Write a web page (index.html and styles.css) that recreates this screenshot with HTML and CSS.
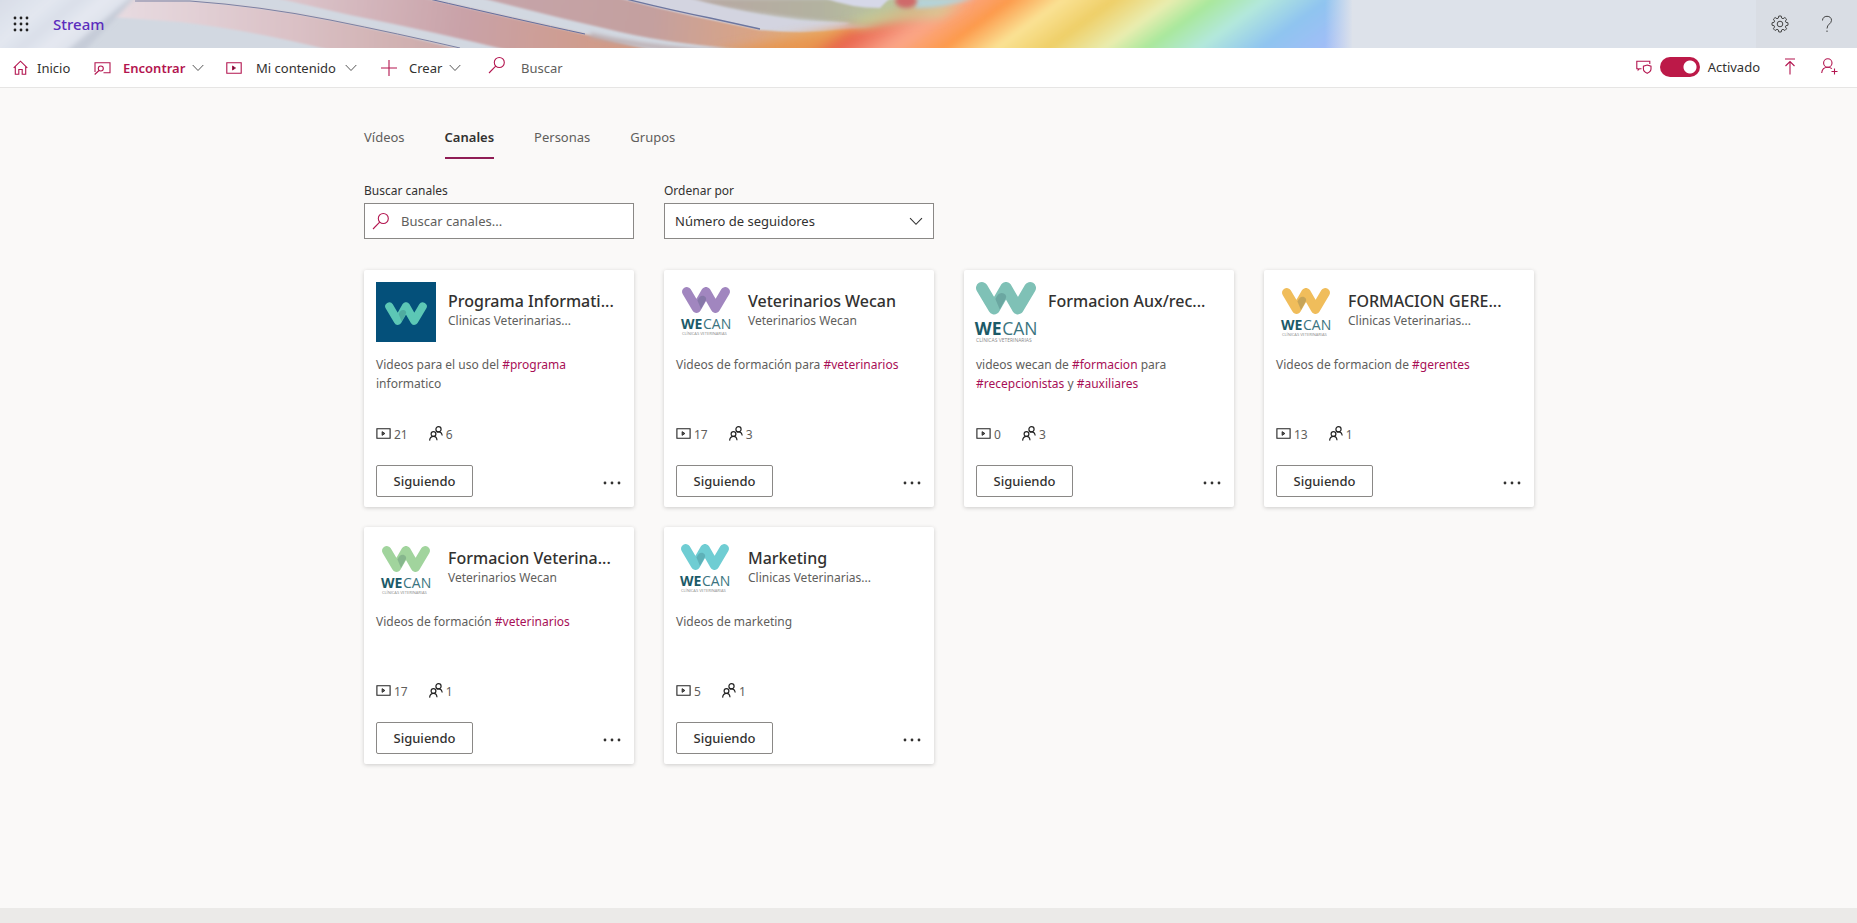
FILE: index.html
```html
<!DOCTYPE html>
<html lang="es">
<head>
<meta charset="utf-8">
<title>Stream</title>
<link rel="stylesheet" href="styles.css">
</head>
<body>
<svg class="defs" aria-hidden="true">
  <symbol id="i-chevron" viewBox="0 0 12 8"><path d="M.7 1 6 6.5 11.300 1"/></symbol>
  <symbol id="i-search" viewBox="0 0 18 18"><circle cx="11.300" cy="6.500" r="5"/><path d="M7.700 10.200 1 17"/></symbol>
  <symbol id="i-video" viewBox="0 0 16 12"><path d="M.8 .8h14.400v10.400H.8z"/><path class="solid" d="M6.500 4v4l3-2z"/></symbol>
  <symbol id="i-people" viewBox="0 0 14 15"><circle cx="4.500" cy="8" r="2.400"/><path d="M.6 14.600c.2-2.600 1.700-4.200 3.900-4.200s3.300 1.500 3.500 3.800"/><circle cx="9.500" cy="3.300" r="2.600"/><path d="M7.700 6.300c.6-.4 1.200-.5 1.800-.5 2 0 3.400 1.300 3.700 3.700"/></symbol>
  <symbol id="i-more" viewBox="0 0 18 4"><circle cx="2" cy="2" r="1.400"/><circle cx="9" cy="2" r="1.400"/><circle cx="16" cy="2" r="1.400"/></symbol>
  <symbol id="w-mark" viewBox="0 0 60 60"><path class="w" d="M10.700 9.700 20.500 26.200 30 9.700M30 9.700 39.500 26.200 49.300 9.700"/><path class="fold" d="M21.500 18.500c1.500-4 4.200-5.700 6.800-4.300 1.800 1 2.300 2.500 1.500 4L25 27z"/></symbol>
</svg>

<header class="banner">
  <svg class="banner-art" viewBox="0 0 1857 48" preserveAspectRatio="none" aria-hidden="true">
    <defs>
      <linearGradient id="rainbow" gradientUnits="userSpaceOnUse" x1="880" y1="0" x2="1400" y2="0" gradientTransform="skewX(-54)">
        <stop offset="0" stop-color="#e8964f"/><stop offset=".04" stop-color="#e8604a"/><stop offset=".15" stop-color="#fba88c"/><stop offset=".25" stop-color="#fd9a4c"/><stop offset=".35" stop-color="#fae294"/><stop offset=".45" stop-color="#efcf68"/><stop offset=".56" stop-color="#e9edb0"/><stop offset=".64" stop-color="#a9e89c"/><stop offset=".74" stop-color="#b3e8dc"/><stop offset=".86" stop-color="#8fc4f0"/><stop offset="1" stop-color="#a4bdf8"/>
      </linearGradient>
      <linearGradient id="fade"><stop offset="0" stop-color="#dde2ea" stop-opacity="0"/><stop offset="1" stop-color="#dde2ea"/></linearGradient>
      <linearGradient id="band" gradientUnits="userSpaceOnUse" x1="110" y1="0" x2="460" y2="0"><stop offset="0" stop-color="#e8dce2"/><stop offset=".5" stop-color="#dbc2c7"/><stop offset="1" stop-color="#cba8a6"/></linearGradient>
      <linearGradient id="band2" gradientUnits="userSpaceOnUse" x1="285" y1="0" x2="640" y2="48"><stop offset="0" stop-color="#dcc6cc"/><stop offset=".5" stop-color="#c9a2a8"/><stop offset="1" stop-color="#d29a82"/></linearGradient>
      <linearGradient id="band3" gradientUnits="userSpaceOnUse" x1="490" y1="0" x2="850" y2="48"><stop offset="0" stop-color="#c6a5aa"/><stop offset=".45" stop-color="#c4a09f"/><stop offset=".75" stop-color="#dba583"/><stop offset="1" stop-color="#ecb764"/></linearGradient>
      <linearGradient id="band4" gradientUnits="userSpaceOnUse" x1="690" y1="0" x2="950" y2="0"><stop offset="0" stop-color="#b8a7a3"/><stop offset=".5" stop-color="#b3b2a0"/><stop offset="1" stop-color="#c0d49c"/></linearGradient>
      <linearGradient id="sheen" gradientUnits="userSpaceOnUse" x1="0" y1="0" x2="130" y2="0" gradientTransform="skewX(-50)"><stop offset="0" stop-color="#d8dde7"/><stop offset=".4" stop-color="#e3e7f0"/><stop offset=".6" stop-color="#dadfe9"/><stop offset=".8" stop-color="#e5e8f1"/><stop offset=".96" stop-color="#dfe3ec"/><stop offset="1" stop-color="#c6ccd8"/></linearGradient>
      <filter id="soft" x="-20%" y="-60%" width="140%" height="220%"><feGaussianBlur stdDeviation="6"/></filter>
      <filter id="light" x="-20%" y="-60%" width="140%" height="220%"><feGaussianBlur stdDeviation="2"/></filter>
      <filter id="edge" x="-5%" y="-20%" width="110%" height="140%"><feGaussianBlur stdDeviation=".8"/></filter>
    </defs>
    <rect width="1857" height="48" fill="#d2d8e1"/>
    <path d="M125-2 190 1Q260 6 330 20T462 50H330Q250 30 180 22L112 17z" fill="url(#band)" filter="url(#edge)"/>
    <path d="M135 1H190Q260 6 330 20T460 48" fill="none" stroke="#7b81a3"/>
    <path d="M276-2H425Q520 20 580 33Q620 43 660 52H515Q440 33 350 15z" fill="url(#band2)" filter="url(#edge)"/>
    <path d="M425-2Q520 20 585 34" fill="none" stroke="#646f9e"/>
    <path d="M482-2H620Q690 15 760 30Q830 34 900 24L920 52H780Q680 46 620 32Q550 16 482-2z" fill="url(#band3)" filter="url(#edge)"/>
    <path d="M590 35Q640 47 700 51H800" fill="none" stroke="#b9a9ab" stroke-width="4" filter="url(#light)"/>
    <path d="M682-2H960L900 30 840 23Q750 16 682-2z" fill="url(#band4)" filter="url(#light)"/>
    <path d="M622-2H688Q740 13 800 21L850 23Q830 34 780 31Q700 20 622-2z" fill="#d3d4e0" filter="url(#edge)"/>
    <path d="M622-2Q670 10 710 18L760 29" fill="none" stroke="#6d769f" stroke-width="1.300"/>
    <path d="M720 52Q800 36 865 25Q900 12 930 5L1010-30H1420V70H720z" fill="url(#rainbow)" filter="url(#soft)"/>
    <path d="M985-2H1420V50H910z" fill="url(#rainbow)" filter="url(#light)"/>
    <path d="M850 22Q880 13 900 12T965 2L940 16Q900 18 860 27z" fill="#c7d99a" filter="url(#soft)"/>
    <path d="M825-2H890L880 8Q850 8 825-2z" fill="#d6d8e8" filter="url(#edge)"/>
    <path d="M915-2H975Q940 9 915 8z" fill="#b5d3d8" filter="url(#light)"/>
    <ellipse cx="906" cy="1" rx="11" ry="7" fill="#cf6a6a" filter="url(#light)"/>
    <path d="M-9-9H141L80 56H-9z" fill="url(#sheen)" filter="url(#light)"/>
    <rect x="1325" width="28" height="48" fill="url(#fade)"/>
    <rect x="1352" width="505" height="48" fill="#dde2ea"/>
  </svg>
  <button class="waffle" aria-label="Iniciador de aplicaciones">
    <svg viewBox="0 0 16 16" width="16" height="16"><g fill="#222"><circle cx="2" cy="2" r="1.400"/><circle cx="8" cy="2" r="1.400"/><circle cx="14" cy="2" r="1.400"/><circle cx="2" cy="8" r="1.400"/><circle cx="8" cy="8" r="1.400"/><circle cx="14" cy="8" r="1.400"/><circle cx="2" cy="14" r="1.400"/><circle cx="8" cy="14" r="1.400"/><circle cx="14" cy="14" r="1.400"/></g></svg>
  </button>
  <a class="brand" href="#">Stream</a>
  <div class="banner-tools">
    <button aria-label="Configuración"><svg class="line" viewBox="0 0 18 18" width="18" height="18"><circle cx="9" cy="9" r="2.800"/><path d="M7.800 1h2.400l.5 2.100 1.300.6 1.900-1.200 1.700 1.700-1.200 1.900.5 1.200 2.100.5v2.400l-2.100.5-.5 1.200 1.200 1.900-1.700 1.700-1.900-1.200-1.300.6-.5 2.100H7.800l-.5-2.100-1.300-.6-1.900 1.200-1.700-1.700 1.200-1.900-.5-1.200L1 10.200V7.800l2.100-.5.5-1.200-1.200-1.900 1.700-1.700L6 3.700l1.300-.6z"/></svg></button>
    <button aria-label="Ayuda"><svg class="line" viewBox="0 0 12 18" width="12" height="18"><path d="M1.500 5.500C1.500 3 3.300 1.300 6 1.300s4.500 1.600 4.500 4c0 3.600-4.500 3.800-4.500 8.200"/><path d="M6 15.500V17"/></svg></button>
  </div>
</header>

<nav class="nav">
  <a class="item home" href="#"><svg class="pink" viewBox="0 0 15 15" width="15" height="15"><path d="M.7 7.800 7.500 1.200l6.800 6.600M2.300 6.500v7.800h3.500V9.500h3.400v4.800h3.500V6.500"/></svg>Inicio</a>
  <button class="item find"><svg class="pink" viewBox="0 0 17 14" width="17" height="14"><path d="M1 11V1.700h15v10H9.500"/><circle cx="6.800" cy="7.500" r="2.500"/><path d="M5 9.500.7 13.500"/></svg>Encontrar<svg class="chev" width="12" height="8"><use href="#i-chevron"/></svg></button>
  <button class="item mine"><svg class="pink" width="16" height="12"><use href="#i-video"/></svg>Mi contenido<svg class="chev" width="12" height="8"><use href="#i-chevron"/></svg></button>
  <button class="item create"><svg class="pink" viewBox="0 0 16 16" width="16" height="16"><path d="M8 0v16M0 8h16"/></svg>Crear<svg class="chev" width="12" height="8"><use href="#i-chevron"/></svg></button>
  <div class="find-box"><svg class="pink" width="18" height="18"><use href="#i-search"/></svg><input type="search" placeholder="Buscar" aria-label="Buscar"></div>
  <div class="nav-right">
    <svg class="pink" viewBox="0 0 16 14" width="16" height="14" aria-hidden="true"><path d="M5.500 8.700H3.500L2.200 10V8.700H.8V1.200h13V4"/><path d="M11.200 5 15 6.200V9c0 2-1.500 3.300-3.800 4.300C9 12.300 7.400 11 7.400 9V6.200z"/></svg>
    <label class="toggle"><input type="checkbox" role="switch" checked><span>Activado</span></label>
    <button aria-label="Cargar"><svg class="pink" viewBox="0 0 12 17" width="12" height="17"><path d="M1 1h10M6 16.500V3.500M1.500 8 6 3.500 10.500 8"/></svg></button>
    <button aria-label="Invitar"><svg class="pink" viewBox="0 0 17 17" width="17" height="17"><circle cx="6.800" cy="5" r="4.200"/><path d="M.7 15c.3-3.500 2.700-5.800 6.100-5.800 1.700 0 3 .5 4 1.500M13.500 10.500v6M10.500 13.500h6"/></svg></button>
  </div>
</nav>

<main class="page">
  <div class="tabs" role="tablist">
    <a href="#" role="tab">Vídeos</a><a class="active" href="#" role="tab" aria-selected="true">Canales</a><a href="#" role="tab">Personas</a><a href="#" role="tab">Grupos</a>
  </div>
  <div class="grid filters">
    <div class="field"><label for="q">Buscar canales</label><div class="box"><svg class="pink" width="18" height="18"><use href="#i-search"/></svg><input id="q" type="text" placeholder="Buscar canales..."></div></div>
    <div class="field"><label for="sort">Ordenar por</label><div class="box"><select id="sort"><option>Número de seguidores</option></select><svg class="arrow" width="14" height="9"><use href="#i-chevron"/></svg></div></div>
  </div>
  <div class="grid">
    <article class="card">
      <div class="head"><svg class="logo navy" viewBox="0 0 60 60"><rect width="60" height="60"/><use href="#w-mark" x="4" y="16" width="52" height="52"/></svg><div class="names"><h2>Programa Informati...</h2><p>Clinicas Veterinarias...</p></div></div>
      <p class="desc">Videos para el uso del <a href="#">#programa</a> informatico</p>
      <div class="stats"><span><svg width="15" height="11"><use href="#i-video"/></svg>21</span><span><svg width="14" height="15"><use href="#i-people"/></svg>6</span></div>
      <div class="foot"><button class="follow">Siguiendo</button><button class="more" aria-label="Más"><svg width="18" height="4"><use href="#i-more"/></svg></button></div>
    </article>
    <article class="card">
      <div class="head"><svg class="logo purple" viewBox="0 0 60 60"><use href="#w-mark" width="60" height="60"/><text class="we" x="5" y="47">WE</text><text class="can" x="27" y="47">CAN</text><text class="tag" x="6" y="53">CLÍNICAS VETERINARIAS</text></svg><div class="names"><h2>Veterinarios Wecan</h2><p>Veterinarios Wecan</p></div></div>
      <p class="desc">Videos de formación para <a href="#">#veterinarios</a></p>
      <div class="stats"><span><svg width="15" height="11"><use href="#i-video"/></svg>17</span><span><svg width="14" height="15"><use href="#i-people"/></svg>3</span></div>
      <div class="foot"><button class="follow">Siguiendo</button><button class="more" aria-label="Más"><svg width="18" height="4"><use href="#i-more"/></svg></button></div>
    </article>
    <article class="card">
      <div class="head"><svg class="logo teal" viewBox="6 5 48 48"><use href="#w-mark" width="60" height="60"/><text class="we" x="5" y="47">WE</text><text class="can" x="27" y="47">CAN</text><text class="tag" x="6" y="53">CLÍNICAS VETERINARIAS</text></svg><div class="names"><h2>Formacion Aux/rec...</h2></div></div>
      <p class="desc">videos wecan de <a href="#">#formacion</a> para <a href="#">#recepcionistas</a> y <a href="#">#auxiliares</a></p>
      <div class="stats"><span><svg width="15" height="11"><use href="#i-video"/></svg>0</span><span><svg width="14" height="15"><use href="#i-people"/></svg>3</span></div>
      <div class="foot"><button class="follow">Siguiendo</button><button class="more" aria-label="Más"><svg width="18" height="4"><use href="#i-more"/></svg></button></div>
    </article>
    <article class="card">
      <div class="head"><svg class="logo amber" viewBox="0 -1 60 60"><use href="#w-mark" width="60" height="60"/><text class="we" x="5" y="47">WE</text><text class="can" x="27" y="47">CAN</text><text class="tag" x="6" y="53">CLÍNICAS VETERINARIAS</text></svg><div class="names"><h2>FORMACION GERE...</h2><p>Clinicas Veterinarias...</p></div></div>
      <p class="desc">Videos de formacion de <a href="#">#gerentes</a></p>
      <div class="stats"><span><svg width="15" height="11"><use href="#i-video"/></svg>13</span><span><svg width="14" height="15"><use href="#i-people"/></svg>1</span></div>
      <div class="foot"><button class="follow">Siguiendo</button><button class="more" aria-label="Más"><svg width="18" height="4"><use href="#i-more"/></svg></button></div>
    </article>
    <article class="card">
      <div class="head"><svg class="logo green" viewBox="0 -2 60 60"><use href="#w-mark" width="60" height="60"/><text class="we" x="5" y="47">WE</text><text class="can" x="27" y="47">CAN</text><text class="tag" x="6" y="53">CLÍNICAS VETERINARIAS</text></svg><div class="names"><h2>Formacion Veterina...</h2><p>Veterinarios Wecan</p></div></div>
      <p class="desc">Videos de formación <a href="#">#veterinarios</a></p>
      <div class="stats"><span><svg width="15" height="11"><use href="#i-video"/></svg>17</span><span><svg width="14" height="15"><use href="#i-people"/></svg>1</span></div>
      <div class="foot"><button class="follow">Siguiendo</button><button class="more" aria-label="Más"><svg width="18" height="4"><use href="#i-more"/></svg></button></div>
    </article>
    <article class="card">
      <div class="head"><svg class="logo cyan" viewBox="1 0 60 60"><use href="#w-mark" width="60" height="60"/><text class="we" x="5" y="47">WE</text><text class="can" x="27" y="47">CAN</text><text class="tag" x="6" y="53">CLÍNICAS VETERINARIAS</text></svg><div class="names"><h2>Marketing</h2><p>Clinicas Veterinarias...</p></div></div>
      <p class="desc">Videos de marketing</p>
      <div class="stats"><span><svg width="15" height="11"><use href="#i-video"/></svg>5</span><span><svg width="14" height="15"><use href="#i-people"/></svg>1</span></div>
      <div class="foot"><button class="follow">Siguiendo</button><button class="more" aria-label="Más"><svg width="18" height="4"><use href="#i-more"/></svg></button></div>
    </article>
  </div>
</main>
<footer class="bottom"></footer>
</body>
</html>
```
FILE: styles.css
```css
* { box-sizing: border-box; }
body {
  margin: 0;
  min-height: 100vh;
  display: flex;
  flex-direction: column;
  background: #faf9f8;
  color: #323130;
  font: 13px/20px "Noto Sans", "Open Sans", sans-serif;
}
a { color: inherit; text-decoration: none; }
button, input, select { font: inherit; color: inherit; background: none; border: 0; padding: 0; margin: 0; }
h2, p { margin: 0; }
svg { display: block; flex: none; fill: none; }
.defs { position: absolute; width: 0; height: 0; }
.pink { stroke: #b3154f; stroke-width: 1.1; }
.solid { stroke-width: 1; }
.line { stroke: #444; stroke-width: 1; }

.banner { position: relative; height: 48px; display: flex; align-items: center; overflow: hidden; }
.banner-art { position: absolute; inset: 0; width: 100%; height: 100%; }
.waffle { position: relative; padding-left: 13px; }
.brand { position: relative; margin-left: 24px; font-size: 15px; font-weight: 500; color: #5b2dbd; }
.banner-tools { position: relative; margin-left: auto; width: 101px; height: 48px; padding: 0 24px 0 15px; display: flex; align-items: center; justify-content: space-between; background: #d9dde4; }

.nav { height: 40px; flex: none; display: flex; align-items: center; background: #fff; border-bottom: 1px solid #e6e5e4; padding: 0 19px 0 13px; }
.item { display: flex; align-items: center; white-space: nowrap; }
.chev { stroke: #555; }
.home { gap: 9px; width: 81px; }
.find { gap: 12px; width: 132px; color: #b3154f; font-weight: 600; }
.find .chev, .mine .chev, .create .chev { margin-left: -5px; }
.mine { gap: 14px; width: 155px; }
.create { gap: 12px; width: 107px; }
.find-box { display: flex; align-items: center; gap: 15px; }
.find-box svg { margin-bottom: 5px; }
.find-box input { width: 160px; }
input::placeholder { color: #605e5c; opacity: 1; }
.nav-right { margin-left: auto; padding-bottom: 2px; display: flex; align-items: center; }
.toggle { display: flex; align-items: center; gap: 8px; margin: 0 24px 0 8px; }
.toggle input { appearance: none; width: 40px; height: 20px; border-radius: 10px; background: radial-gradient(circle at 30px 10px, #fff 6px, #bc1948 7px); }
.nav-right button + button { margin-left: 25px; }

.page { flex: 1; width: 100%; max-width: 1211px; margin: 0 auto; padding: 36px 0 24px 41px; }
.tabs { display: flex; gap: 40px; height: 35px; color: #605e5c; }
.tabs a { padding-top: 3px; height: 35px; }
.tabs .active { color: #323130; font-weight: 600; border-bottom: 2px solid #8f1d55; }
.grid { display: grid; grid-template-columns: repeat(auto-fill, 270px); gap: 20px 30px; }
.filters { padding: 22px 0 31px; }
.field label { display: block; font-size: 12px; line-height: 20px; margin-bottom: 2px; }
.box { position: relative; height: 36px; display: flex; align-items: center; border: 1px solid #8a8886; background: #fff; }
.box input { flex: 1; padding-left: 11px; min-width: 0; }
.box .pink { margin-left: 7px; }
.box select { appearance: none; width: 100%; height: 100%; padding: 0 32px 0 10px; }
.arrow { position: absolute; right: 10px; stroke: #333; }

.card { background: #fff; border-radius: 2px; padding: 12px 12px 10px; height: 237px; display: flex; flex-direction: column; box-shadow: 0 1px 4px rgba(0, 0, 0, .18); }
.head { display: flex; gap: 12px; height: 60px; }
.logo { width: 60px; height: 60px; overflow: visible; }
.names { min-width: 0; flex: 1; padding-top: 8px; }
.names h2 { font-size: 16px; line-height: 22px; font-weight: 500; white-space: nowrap; }
.names p { font-size: 12px; line-height: 18px; color: #605e5c; }
.desc { margin-top: 13px; height: 70px; font-size: 12px; line-height: 19px; color: #605e5c; }
.desc a { color: #a80f56; }
.stats { display: flex; gap: 21px; height: 20px; font-size: 12px; color: #605e5c; }
.stats span { display: flex; align-items: center; gap: 3px; }
.stats svg { stroke: #222; stroke-width: 1.2; margin-bottom: 4px; }
.stats .solid, .solid { fill: currentColor; }
.foot { display: flex; align-items: center; justify-content: space-between; margin-top: auto; height: 32px; }
.follow { width: 97px; height: 32px; border: 1px solid #8a8886; border-radius: 2px; font-weight: 500; background: #fff; }
.more { padding: 4px 1px 0 0; }
.more svg { fill: #323130; }

.w { stroke: currentColor; stroke-width: 9.4; stroke-linecap: round; stroke-linejoin: round; }
.fold { fill: #204050; opacity: .2; }
.we { font: 700 14px "Open Sans", sans-serif; fill: #1b5a68; }
.can { font: 400 14px "Open Sans", sans-serif; fill: #3b7480; }
.tag { font: 4px "Open Sans", sans-serif; fill: #8a8a8a; }
.navy { color: #5cc7b5; }
.navy rect { fill: #04507a; }
.purple { color: #a186bf; }
.teal { color: #7fc1b6; }
.amber { color: #f0bd5b; }
.green { color: #a1d49d; }
.cyan { color: #6fcdd3; }

.bottom { height: 15px; background: #ebeae8; }
```
